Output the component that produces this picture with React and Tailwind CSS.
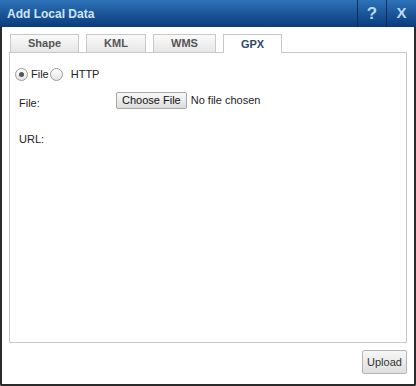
export default function App() {
  return (
    <div className="w-[416px] h-[386px] bg-white font-['Liberation_Sans'] text-[11px] text-[#222]">
      <div className="flex flex-col h-full border-x-2 border-b-2 border-[#2b2b2b] rounded-b-[2px]">
        <div className="flex h-[27px] bg-gradient-to-b from-[#2d72b8] to-[#0a3c7c] -mx-[2px]">
          <div className="flex-1 flex items-center pl-[7px] font-bold text-[12px] text-[#cfe6f8]">Add Local Data</div>
          <div className="w-[29px] flex items-center justify-center border-l border-[#0b2d5a] font-bold text-[17px] text-[#b9daf2]">?</div>
          <div className="w-[30px] flex items-center justify-center border-l border-[#0b2d5a] font-bold text-[15px] text-[#b9daf2]">X</div>
        </div>
        <div className="flex-1 flex flex-col px-[7px] pt-[8px] pb-[10px]">
          <div className="flex items-end gap-[7px] pl-[1px] h-[18px] border-b border-[#c8c8c8]">
            <div className="w-[69px] h-[18px] flex items-center justify-center border border-b-0 border-[#c8c8c8] bg-gradient-to-b from-[#fafafa] to-[#e6e6e6] font-bold text-[#555]">Shape</div>
            <div className="w-[60px] h-[18px] flex items-center justify-center border border-b-0 border-[#c8c8c8] bg-gradient-to-b from-[#fafafa] to-[#e6e6e6] font-bold text-[#555]">KML</div>
            <div className="w-[63px] h-[18px] flex items-center justify-center border border-b-0 border-[#c8c8c8] bg-gradient-to-b from-[#fafafa] to-[#e6e6e6] font-bold text-[#555]">WMS</div>
            <div className="w-[59px] h-[19px] -mb-px flex items-center justify-center border border-b-0 border-[#c8c8c8] bg-white font-bold text-[#2b4a73]">GPX</div>
          </div>
          <div className="flex-1 border border-t-0 border-[#c8c8c8] flex flex-col">
            <div className="flex items-center mt-[13px] ml-[5px]">
              <span className="w-[13px] h-[13px] rounded-full border border-[#9a9a9a] bg-gradient-to-b from-white to-[#e4e4e4] flex items-center justify-center">
                <span className="w-[5px] h-[5px] rounded-full bg-[#555]"></span>
              </span>
              <span className="ml-[3px]">File</span>
              <span className="ml-[1px] w-[13px] h-[13px] rounded-full border border-[#9a9a9a] bg-gradient-to-b from-white to-[#e4e4e4]"></span>
              <span className="ml-[8px]">HTTP</span>
            </div>
            <div className="flex items-center mt-[7px] ml-[9px]">
              <span className="w-[97px] pt-[5px]">File:</span>
              <span className="h-[17px] px-[5px] flex items-center border border-[#a6a6a6] rounded-[2px] bg-gradient-to-b from-[#f8f8f8] to-[#dddddd] text-[#111]">Choose File</span>
              <span className="ml-[4px]">No file chosen</span>
            </div>
            <div className="mt-[20px] ml-[9px]">URL:</div>
          </div>
          <div className="flex justify-end mt-[7px]">
            <span className="h-[24px] w-[45px] flex items-center justify-center border border-[#b4b4b4] rounded-[2px] bg-gradient-to-b from-[#f7f7f7] to-[#dfdfdf] text-[#333]">Upload</span>
          </div>
        </div>
      </div>
    </div>
  );
}
